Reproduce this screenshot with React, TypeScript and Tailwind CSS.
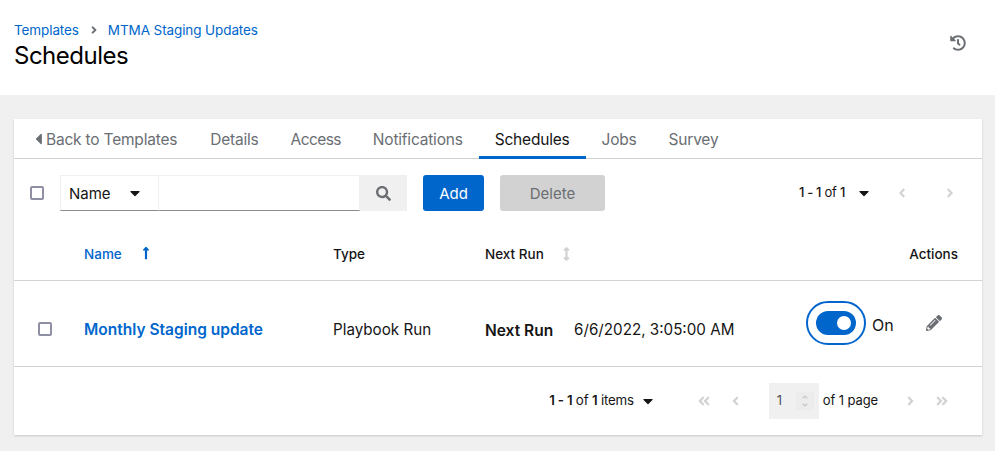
import React from 'react';
import {
  FaAngleDoubleLeft,
  FaAngleDoubleRight,
  FaAngleDown,
  FaAngleLeft,
  FaAngleRight,
  FaAngleUp,
  FaArrowsAltV,
  FaCaretDown,
  FaCaretLeft,
  FaHistory,
  FaLongArrowAltUp,
  FaPencilAlt,
  FaSearch,
} from 'react-icons/fa';

const tabs = ['Details', 'Access', 'Notifications', 'Schedules', 'Jobs', 'Survey'];

function Checkbox() {
  return <div className="w-[14px] h-[14px] rounded-[2px] border-2 border-[#8f8fa3] bg-white" />;
}

export default function App() {
  return (
    <div className="w-[995px] h-[451px] overflow-hidden bg-[#f0f0f0] text-[#151515] font-['Inter',sans-serif] text-[14px]">
      {/* Page header */}
      <div className="h-[95px] bg-white pl-[14px] pr-[29px] pt-[21px] flex justify-between">
        <div>
          <div className="flex items-center h-[18px] text-[13.5px] text-[#0066cc] tracking-[-0.1px]">
            <span>Templates</span>
            <FaAngleRight className="w-[10px] h-[12px] ml-[10px] mr-[9px] text-[#6a6e73]" />
            <span>MTMA Staging Updates</span>
          </div>
          <h1 className="mt-[1px] text-[24px] leading-[32px] text-black tracking-[-0.5px]">Schedules</h1>
        </div>
        <FaHistory className="mt-[14px] w-[16px] h-[16px] text-[#6a6e73]" />
      </div>

      <div className="pl-[14px] pr-[13px] pt-[24px]">
        <div className="h-[316px] bg-white shadow-[0_1px_2px_rgba(3,3,3,0.16)]">
          {/* Tabs */}
          <div className="h-[40px] pl-[21px] flex border-b border-[#d2d2d2] text-[#6a6e73] text-[15.5px] tracking-[-0.2px]">
            <div className="flex items-center mr-[17px] pt-[2px]">
              <FaCaretLeft className="w-[7px] h-[18px] mr-[4px] -mt-[2px]" />
              <span>Back to Templates</span>
            </div>
            {tabs.map((tab) => (
              <div
                key={tab}
                className={
                  tab === 'Schedules'
                    ? 'flex items-center px-[16px] h-[40px] text-[#151515] border-b-[3px] border-[#0066cc] pt-[5px]'
                    : 'flex items-center px-[16px] h-[40px] pt-[2px]'
                }
              >
                <span className={tab === 'Access' ? 'tracking-[-0.6px]' : ''}>{tab}</span>
              </div>
            ))}
          </div>

          {/* Toolbar */}
          <div className="h-[68px] pt-[16px] pl-[16px] pr-[27px] flex items-start">
            <div className="h-[36px] flex items-center">
              <Checkbox />
            </div>
            <div className="ml-[16px] flex h-[36px] w-[347px]">
              <div className="w-[99px] flex items-center justify-between pl-[8px] pr-[18px] border border-[#f0f0f0] border-b-[#8a8d90] pt-[2px]">
                <span className="text-[15px]">Name</span>
                <FaCaretDown className="w-[10px] h-[16px] -mt-[2px]" />
              </div>
              <div className="w-[201px] border-t border-r border-[#f0f0f0] border-b border-b-[#8a8d90]" />
              <div className="flex-1 bg-[#f0f0f0] flex items-center justify-center">
                <FaSearch className="w-[15px] h-[15px] text-[#6a6e73]" />
              </div>
            </div>
            <button className="ml-[16px] w-[61px] h-[36px] pt-[2px] rounded-[3px] bg-[#0066cc] text-white text-[15px]">Add</button>
            <button className="ml-[16px] w-[105px] h-[36px] pt-[2px] rounded-[3px] bg-[#d2d2d2] text-[#6a6e73] text-[15px]">Delete</button>
            <div className="ml-auto h-[36px] flex items-center">
              <span className="text-[13px] tracking-[-0.3px]">
                <span className="font-medium">1 - 1</span> of <span className="font-medium">1</span>
              </span>
              <FaCaretDown className="ml-[14px] w-[10px] h-[16px]" />
              <FaAngleLeft className="ml-[28px] w-[10px] h-[14px] text-[#d2d2d2]" />
              <FaAngleRight className="ml-[38px] w-[10px] h-[14px] text-[#d2d2d2]" />
            </div>
          </div>

          {/* Table head */}
          <div className="h-[54px] flex items-start pt-[17px] border-b border-[#d2d2d2] text-[13.5px] font-medium">
            <div className="w-[70px]" />
            <div className="w-[249px] flex items-center text-[#0066cc] h-[20px]">
              <span>Name</span>
              <FaLongArrowAltUp className="ml-[20px] w-[8px] h-[14px] -mt-[2px]" />
            </div>
            <div className="w-[152px] h-[20px] flex items-center">Type</div>
            <div className="h-[20px] flex items-center">
              <span>Next Run</span>
              <FaArrowsAltV className="ml-[19px] w-[7px] h-[14px] -mt-[1px] text-[#d2d2d2]" />
            </div>
            <div className="ml-auto pr-[24px] h-[20px] flex items-center">Actions</div>
          </div>

          {/* Row */}
          <div className="h-[86px] flex items-center border-b border-[#d2d2d2] pt-[10px]">
            <div className="w-[70px] pl-[24px]">
              <Checkbox />
            </div>
            <div className="w-[249px] pt-[3px] text-[#0066cc] font-semibold text-[15.5px]">Monthly Staging update</div>
            <div className="w-[152px] pt-[4px] text-[15.2px]">Playbook Run</div>
            <div className="w-[321px] pt-[4px] flex items-center text-[15.2px]">
              <span className="font-semibold text-[15.5px] w-[89px]">Next Run</span>
              <span>6/6/2022, 3:05:00 AM</span>
            </div>
            <div className="w-[60px] h-[44px] mb-[12px] rounded-full border-2 border-[#0066cc] flex items-center justify-center">
              <div className="w-[40px] h-[24px] rounded-full bg-[#0066cc] flex items-center justify-end pr-[5px]">
                <div className="w-[14px] h-[14px] rounded-full bg-white" />
              </div>
            </div>
            <span className="ml-[6px] mb-[8px] text-[16px]">On</span>
            <FaPencilAlt className="ml-[32px] mb-[12px] w-[16px] h-[16px] text-[#6a6e73]" />
          </div>

          {/* Footer pagination */}
          <div className="h-[68px] flex items-start justify-end pt-[16px] pr-[33px] text-[13px]">
            <div className="h-[36px] flex items-center">
              <span className="text-[13.3px] tracking-[-0.2px]">
                <span className="font-semibold">1 - 1</span> of <span className="font-semibold">1</span> items
              </span>
              <FaCaretDown className="ml-[9px] w-[10px] h-[16px]" />
              <FaAngleDoubleLeft className="ml-[44px] w-[14px] h-[14px] text-[#d2d2d2]" />
              <FaAngleLeft className="ml-[20px] w-[9px] h-[14px] text-[#d2d2d2]" />
              <div className="ml-[29px] w-[50px] h-[36px] bg-[#f0f0f0] flex items-center pl-[8px] text-[#4f5255]">
                <span className="w-[19px]">1</span>
                <div className="w-[18px] h-[18px] bg-[#ececec] flex flex-col items-center justify-center text-[#c7c7c7]">
                  <FaAngleUp className="w-[10px] h-[8px]" />
                  <FaAngleDown className="w-[10px] h-[8px]" />
                </div>
              </div>
              <span className="ml-[4px] tracking-[-0.1px]">of 1 page</span>
              <FaAngleRight className="ml-[28px] w-[9px] h-[14px] text-[#d2d2d2]" />
              <FaAngleDoubleRight className="ml-[20px] w-[14px] h-[14px] text-[#d2d2d2]" />
            </div>
          </div>
        </div>
      </div>
    </div>
  );
}
